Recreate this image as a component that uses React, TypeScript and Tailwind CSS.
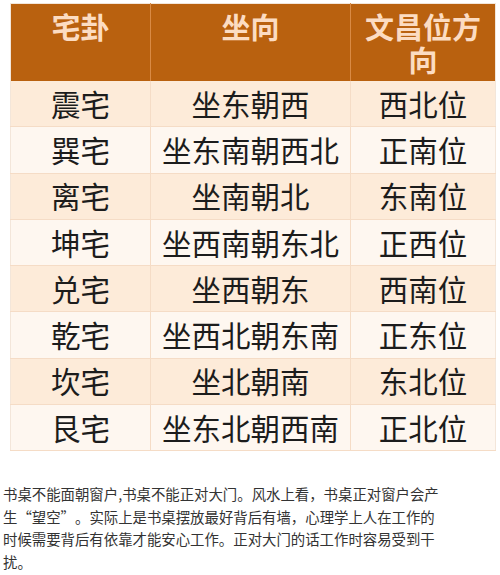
import React from "react";

const rows: [string, string, string][] = [
  ["震宅", "坐东朝西", "西北位"],
  ["巽宅", "坐东南朝西北", "正南位"],
  ["离宅", "坐南朝北", "东南位"],
  ["坤宅", "坐西南朝东北", "正西位"],
  ["兑宅", "坐西朝东", "西南位"],
  ["乾宅", "坐西北朝东南", "正东位"],
  ["坎宅", "坐北朝南", "东北位"],
  ["艮宅", "坐东北朝西南", "正北位"],
];

export default function App() {
  return (
    <div
      className="w-[500px] h-[575px] bg-white overflow-hidden"
      style={{ fontFamily: '"Noto Sans CJK SC", "Noto Sans", sans-serif' }}
    >
      <div className="pt-[3px] pl-[10px]">
        <table className="border-collapse w-[485px] table-fixed border border-[#f3e6da]">
          <colgroup>
            <col className="w-[140px]" />
            <col className="w-[200px]" />
            <col className="w-[145px]" />
          </colgroup>
          <thead>
            <tr className="h-[77px] bg-[#b9610f]">
              <th className="text-[#fcdcc2] text-[29px] font-bold leading-[33px] align-top pt-[6px] border-r border-[#d98a45]">
                宅卦
              </th>
              <th className="text-[#fcdcc2] text-[29px] font-bold leading-[33px] align-top pt-[6px] border-r border-[#d98a45]">
                坐向
              </th>
              <th className="text-[#fcdcc2] text-[29px] font-bold leading-[33px] align-top pt-[6px]">
                文昌位方
                <br />向
              </th>
            </tr>
          </thead>
          <tbody>
            {rows.map((r, i) => (
              <tr
                key={i}
                className={
                  i % 2 === 0
                    ? "h-[46.25px] bg-[#fdebd9]"
                    : "h-[46.25px] bg-[#fef7f0]"
                }
              >
                <td className="text-center text-[29.5px] leading-none text-[#1c1c1c] border-r border-b border-[#f5dcc6]">
                  {r[0]}
                </td>
                <td className="text-center text-[29.5px] leading-none text-[#1c1c1c] border-r border-b border-[#f5dcc6]">
                  {r[1]}
                </td>
                <td className="text-center text-[29.5px] leading-none text-[#1c1c1c] border-b border-[#f5dcc6]">
                  {r[2]}
                </td>
              </tr>
            ))}
          </tbody>
        </table>
      </div>
      <p className="mt-[32px] pl-[3px] text-[14.4px] leading-[22.5px] text-[#333333] whitespace-nowrap">
        书桌不能面朝窗户,书桌不能正对大门。风水上看，书桌正对窗户会产
        <br />
        生<span className="inline-block w-[1em] text-right">“</span>望空<span className="inline-block w-[1em] text-left">”</span>。实际上是书桌摆放最好背后有墙，心理学上人在工作的
        <br />
        时候需要背后有依靠才能安心工作。正对大门的话工作时容易受到干
        <br />
        扰。
      </p>
    </div>
  );
}
